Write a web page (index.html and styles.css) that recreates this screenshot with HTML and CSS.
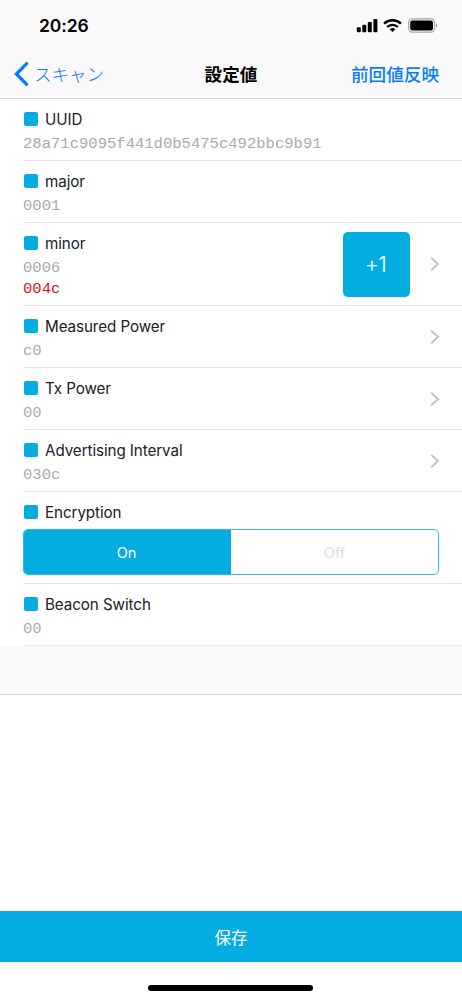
FILE: index.html
```html
<!DOCTYPE html>
<html lang="ja">
<head>
<meta charset="utf-8">
<title>設定値</title>
<link rel="stylesheet" href="styles.css">
</head>
<body>
<div class="screen">
  <header class="header">
    <div class="status">
      <span class="time">20:26</span>
      <svg class="status-icons" width="82" height="16" viewBox="0 0 82 16">
        <rect x="0.8" y="9.2" width="4" height="5" rx="1"/>
        <rect x="6.3" y="6.7" width="4" height="7.5" rx="1"/>
        <rect x="11.8" y="3.9" width="4" height="10.3" rx="1"/>
        <rect x="17.4" y="1" width="4" height="13.2" rx="1"/>
        <g fill="none" stroke="#000" stroke-width="2.4">
          <path d="M28.1 5.7a12.1 12.1 0 0 1 16.8 0"/>
          <path d="M31.1 9a7.8 7.8 0 0 1 10.8 0"/>
        </g>
        <path d="M33.7 11.2a4.4 4.4 0 0 1 5.6 0l-2.8 2.9z"/>
        <rect x="52.6" y="0.9" width="26" height="13.2" rx="3.8" fill="none" stroke="#a5a5a5" stroke-width="1.1"/>
        <rect x="54.2" y="2.6" width="22.8" height="9.9" rx="2.2"/>
        <path d="M80 5.3c1.7.8 1.7 3.6 0 4.4z" fill="#a5a5a5"/>
      </svg>
    </div>
    <nav class="nav">
      <a class="back">
        <svg width="15" height="24" viewBox="0 0 15 24"><path d="M12.6 1.7L2.4 12l10.2 10.3" fill="none" stroke="#0a7aff" stroke-width="3.3" stroke-linecap="round" stroke-linejoin="miter"/></svg>
        <span>スキャン</span>
      </a>
      <h1 class="title">設定値</h1>
      <a class="restore">前回値反映</a>
    </nav>
  </header>
  <main class="list">
    <section class="row">
      <div class="label"><i class="mark"></i>UUID</div>
      <div class="value">28a71c9095f441d0b5475c492bbc9b91</div>
    </section>
    <section class="row">
      <div class="label"><i class="mark"></i>major</div>
      <div class="value">0001</div>
    </section>
    <section class="row row-minor">
      <div class="info">
        <div class="label"><i class="mark"></i>minor</div>
        <div class="value">0006</div>
        <div class="value changed">004c</div>
      </div>
      <div class="side">
        <button class="increment">+1</button>
        <svg class="chevron" width="10" height="16" viewBox="0 0 10 16"><path d="M1.2 1.7L8 8l-6.8 6.3"/></svg>
      </div>
    </section>
    <section class="row row-link">
      <div class="info">
        <div class="label"><i class="mark"></i>Measured Power</div>
        <div class="value">c0</div>
      </div>
      <div class="side"><svg class="chevron" width="10" height="16" viewBox="0 0 10 16"><path d="M1.2 1.7L8 8l-6.8 6.3"/></svg></div>
    </section>
    <section class="row row-link">
      <div class="info">
        <div class="label"><i class="mark"></i>Tx Power</div>
        <div class="value">00</div>
      </div>
      <div class="side"><svg class="chevron" width="10" height="16" viewBox="0 0 10 16"><path d="M1.2 1.7L8 8l-6.8 6.3"/></svg></div>
    </section>
    <section class="row row-link">
      <div class="info">
        <div class="label"><i class="mark"></i>Advertising Interval</div>
        <div class="value">030c</div>
      </div>
      <div class="side"><svg class="chevron" width="10" height="16" viewBox="0 0 10 16"><path d="M1.2 1.7L8 8l-6.8 6.3"/></svg></div>
    </section>
    <section class="row row-encryption">
      <div class="label"><i class="mark"></i>Encryption</div>
      <div class="segments">
        <span class="segment selected">On</span>
        <span class="segment">Off</span>
      </div>
    </section>
    <section class="row">
      <div class="label"><i class="mark"></i>Beacon Switch</div>
      <div class="value">00</div>
    </section>
  </main>
  <div class="list-footer"></div>
  <footer class="footer">
    <button class="save">保存</button>
    <div class="home"></div>
  </footer>
</div>
</body>
</html>
```
FILE: styles.css
```css
* { box-sizing: border-box; }
body {
  margin: 0;
  background: #fff;
  font-family: Inter, "Noto Sans CJK JP", sans-serif;
}
button { border: 0; padding: 0; font-family: inherit; }
.screen { width: 462px; height: 1000px; display: flex; flex-direction: column; overflow: hidden; }
.header { height: 99px; flex: none; background: #f9f9f9; border-bottom: 1px solid #dadada; }
.status { height: 50px; padding: 18px 24px 0 39px; display: flex; justify-content: space-between; }
.time { font-size: 17.5px; line-height: 16px; font-weight: 600; letter-spacing: -0.1px; }
.status-icons { flex: none; }
.nav { height: 48px; display: grid; grid-template-columns: 1fr auto 1fr; align-items: center; padding: 0 23px; }
.back { display: flex; align-items: center; gap: 5px; margin-left: -9px; color: #0a7aff; font-size: 17.5px; line-height: 24px; font-family: "Noto Sans CJK JP", sans-serif; font-weight: 300; }
.title { margin: 0; font-size: 17.6px; line-height: 24px; font-weight: 600; font-family: "Noto Sans CJK JP", sans-serif; }
.restore { justify-self: end; color: #0a7aff; font-size: 17.6px; line-height: 24px; font-weight: 500; font-family: "Noto Sans CJK JP", sans-serif; }
.list { width: 462px; flex: none; }
.row { height: 62px; margin-left: 23px; padding-top: 10px; border-bottom: 1px solid #e6e6e6; }
.row-minor { height: 83px; }
.row-minor, .row-link { display: flex; justify-content: space-between; padding-right: 22px; }
.row-encryption { height: 92px; padding-right: 23px; }
.label { height: 20px; display: flex; align-items: center; gap: 7px; padding-left: 1px; font-size: 15.2px; letter-spacing: -0.08px; color: #202027; white-space: nowrap; }
.mark { width: 14px; height: 14px; flex: none; border-radius: 2px; background: #03ade1; }
.value { margin-top: 6px; height: 18px; font: 15.55px/18px "Liberation Mono", monospace; color: #aaa; }
.value.changed { margin-top: 3px; color: #d2141b; }
.side { display: flex; align-items: center; gap: 20px; margin-top: -10px; }
.chevron { fill: none; stroke: #c4c4c9; stroke-width: 2.1; }
.increment { width: 67px; height: 65px; padding-right: 2px; border-radius: 5px; background: #03ade1; color: #fff; font-size: 21.5px; font-weight: 300; letter-spacing: -0.4px; }
.segments { display: flex; height: 46px; margin-top: 7px; border: 1px solid #2fb6e4; border-radius: 5px; overflow: hidden; }
.segment { flex: 1 1 0; min-width: 0; text-align: center; line-height: 45px; font-size: 14.5px; color: #ddd; }
.segment.selected { background: #03ade1; color: #fff; text-indent: -2px; }
.list-footer { height: 49px; flex: none; background: #f9f9f9; border-bottom: 1px solid #dadada; }
.footer { margin-top: auto; height: 89px; display: flex; flex-direction: column; align-items: center; }
.save { width: 462px; height: 51px; background: #03ade1; color: #fff; font-size: 16.5px; font-weight: 400; }
.home { width: 165px; height: 6px; margin: 23px 1px 0 0; border-radius: 3px; background: #000; }
```
